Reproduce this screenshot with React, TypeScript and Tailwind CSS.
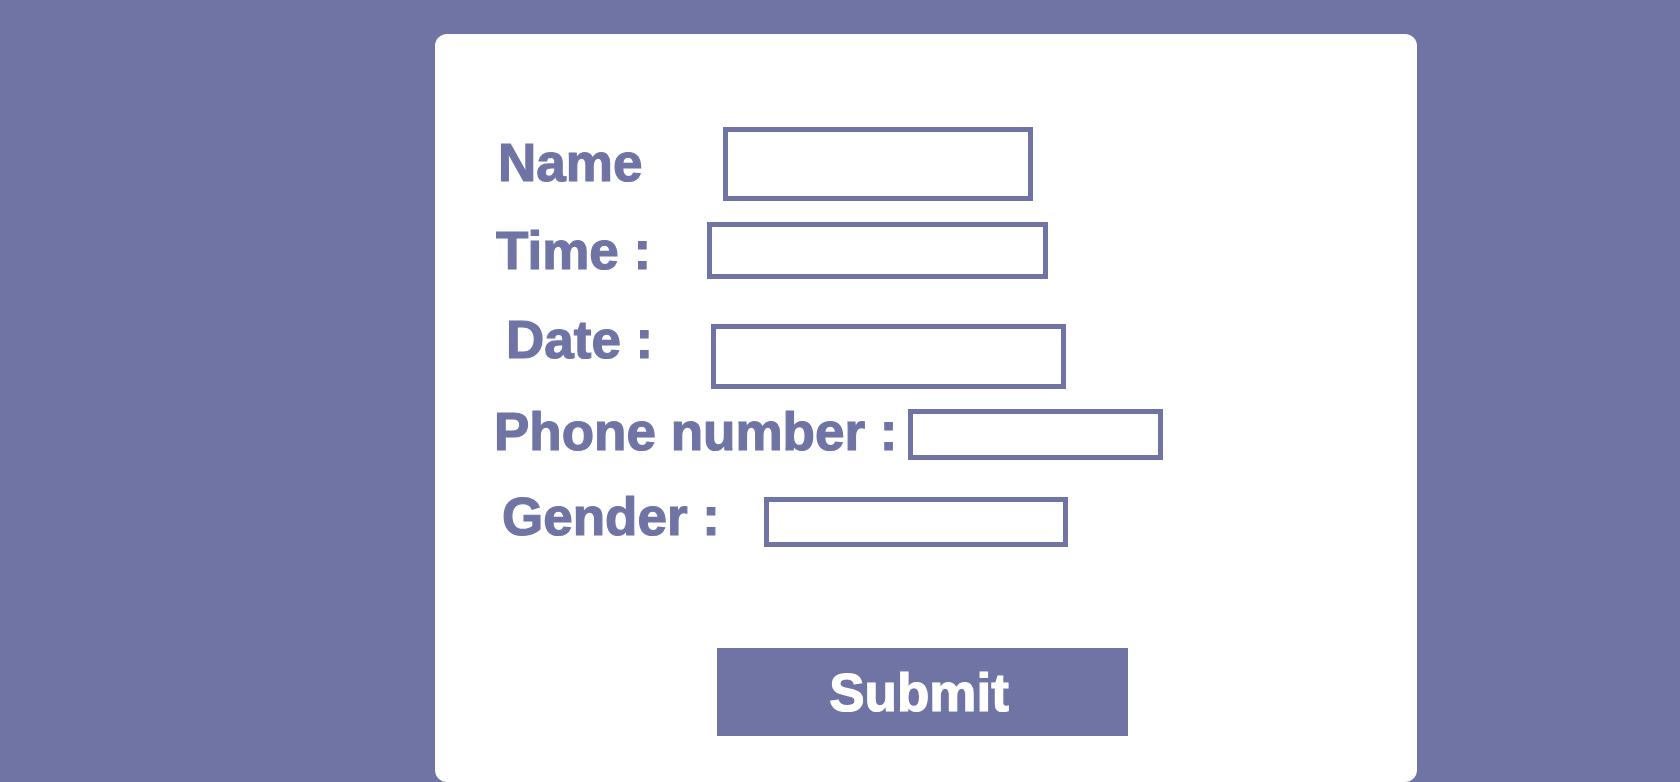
import React from "react";

const fieldCls = "border-[5px] border-[#7074a5] bg-white outline-none shrink-0";
const labelCls =
  "shrink-0 whitespace-nowrap text-[53px] leading-none font-bold text-[#7074a5] [-webkit-text-stroke:1.2px_#7074a5]";

export default function App() {
  return (
    <div className="min-h-[782px] w-full bg-[#7074a5] pt-[34px] overflow-hidden" style={{ fontFamily: '"Liberation Sans", Arial, sans-serif' }}>
      <form
        onSubmit={(e) => e.preventDefault()}
        className="ml-[435px] w-[982px] h-[748px] bg-white rounded-[12px] pt-[94px] flex flex-col"
      >
        {/* Name */}
        <div className="flex items-start pl-[63px]">
          <label className={`${labelCls} w-[225px] mt-[8px]`}>Name</label>
          <input type="text" className={`${fieldCls} w-[310px] h-[74px] -mt-[1px]`} />
        </div>

        {/* Time */}
        <div className="flex items-start pl-[61px] mt-[21px]">
          <label className={`${labelCls} w-[211px] mt-[2px]`}>Time :</label>
          <input type="text" className={`${fieldCls} w-[341px] h-[57px]`} />
        </div>

        {/* Date */}
        <div className="flex items-start pl-[71px] mt-[34px]">
          <label className={`${labelCls} w-[205px]`}>Date :</label>
          <input type="text" className={`${fieldCls} w-[355px] h-[65px] mt-[11px]`} />
        </div>

        {/* Phone number */}
        <div className="flex items-start pl-[59px] mt-[16px]">
          <label className={`${labelCls} w-[414px]`}>Phone number :</label>
          <input type="text" className={`${fieldCls} w-[255px] h-[51px] mt-[4px]`} />
        </div>

        {/* Gender */}
        <div className="flex items-start pl-[67px] mt-[30px]">
          <label className={`${labelCls} w-[262px]`}>Gender :</label>
          <input type="text" className={`${fieldCls} w-[304px] h-[50px] mt-[7px]`} />
        </div>

        <button
          type="submit"
          className="ml-[282px] mt-[101px] w-[411px] h-[88px] pr-[7px] bg-[#7074a5] text-white text-[53px] font-bold leading-none flex items-center justify-center [-webkit-text-stroke:1.2px_#ffffff]"
        >
          Submit
        </button>
      </form>
    </div>
  );
}
